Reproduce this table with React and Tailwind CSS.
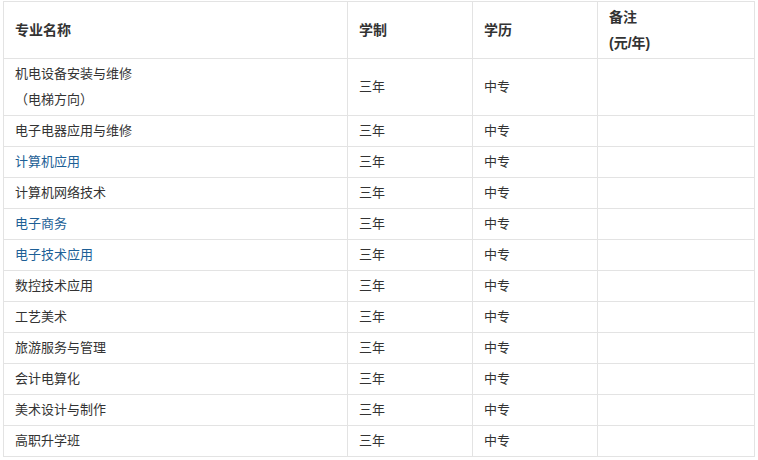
const ROWS = [
  { name: ["机电设备安装与维修", "（电梯方向）"] },
  { name: ["电子电器应用与维修"] },
  { name: ["计算机应用"], link: true },
  { name: ["计算机网络技术"] },
  { name: ["电子商务"], link: true },
  { name: ["电子技术应用"], link: true },
  { name: ["数控技术应用"] },
  { name: ["工艺美术"] },
  { name: ["旅游服务与管理"] },
  { name: ["会计电算化"] },
  { name: ["美术设计与制作"] },
  { name: ["高职升学班"] },
];

const cell = "border border-[#e3e3e3] px-[11px] py-[2px] align-middle";

export default function App() {
  return (
    <div
      className="w-[758px] h-[460px] bg-white pt-px pl-[3px] text-[#333] leading-[26px]"
      style={{ fontFamily: '"Liberation Sans", "Noto Sans CJK SC", sans-serif' }}
    >
      <table className="border-collapse table-fixed w-[751px]">
        <colgroup>
          <col className="w-[344px]" />
          <col className="w-[125px]" />
          <col className="w-[125px]" />
          <col className="w-[157px]" />
        </colgroup>
        <thead>
          <tr className="text-[14px] font-bold text-left">
            <th className={cell}>专业名称</th>
            <th className={cell}>学制</th>
            <th className={cell}>学历</th>
            <th className={cell}>
              <div>备注</div>
              <div>(元/年)</div>
            </th>
          </tr>
        </thead>
        <tbody className="text-[13px]">
          {ROWS.map((r) => (
            <tr key={r.name[0]}>
              <td className={cell}>
                {r.name.map((line) => (
                  <div key={line} className={r.link ? "text-[#1d5f96]" : ""}>
                    {line}
                  </div>
                ))}
              </td>
              <td className={cell}>三年</td>
              <td className={cell}>中专</td>
              <td className={cell}></td>
            </tr>
          ))}
        </tbody>
      </table>
    </div>
  );
}
